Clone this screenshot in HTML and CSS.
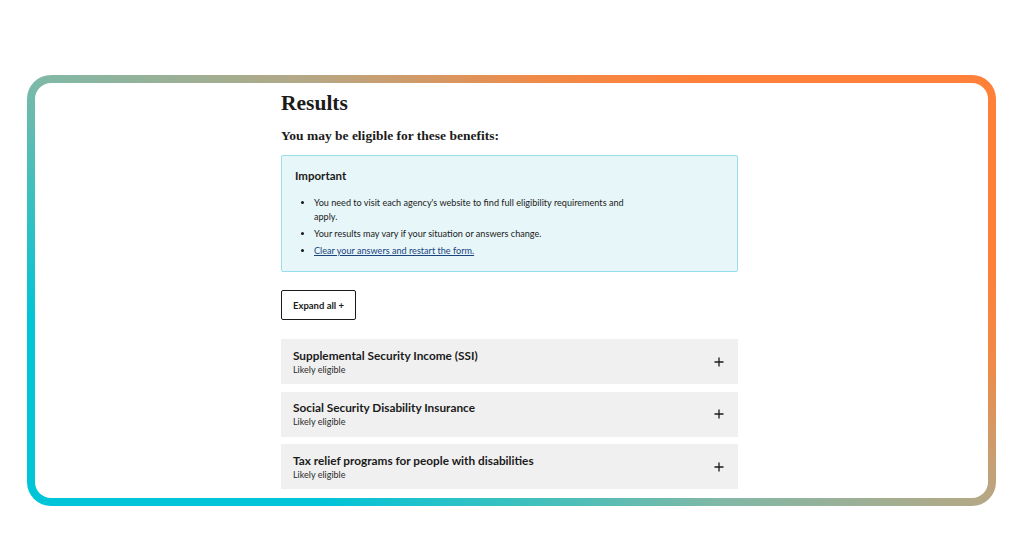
FILE: index.html
```html
<!DOCTYPE html>
<html lang="en">
<head>
<meta charset="utf-8">
<title>Results</title>
<link rel="stylesheet" href="styles.css">
</head>
<body>
<div class="frame">
  <div class="screen">
    <main class="results">
      <h1 class="title">Results</h1>
      <h2 class="subtitle">You may be eligible for these benefits:</h2>
      <section class="alert">
        <h3 class="alert-title">Important</h3>
        <ul class="alert-list">
          <li>You need to visit each agency's website to find full eligibility requirements and apply.</li>
          <li>Your results may vary if your situation or answers change.</li>
          <li><a class="link" href="#">Clear your answers and restart the form.</a></li>
        </ul>
      </section>
      <button class="expand">Expand all +</button>
      <div class="accordion">
        <div class="acc-item">
          <div class="acc-text">
            <div class="acc-title">Supplemental Security Income (SSI)</div>
            <div class="acc-sub">Likely eligible</div>
          </div>
          <svg class="acc-plus" width="10" height="10" viewBox="0 0 10 10" aria-hidden="true"><path d="M5 0.5V9.5M0.5 5H9.5"/></svg>
        </div>
        <div class="acc-item">
          <div class="acc-text">
            <div class="acc-title">Social Security Disability Insurance</div>
            <div class="acc-sub">Likely eligible</div>
          </div>
          <svg class="acc-plus" width="10" height="10" viewBox="0 0 10 10" aria-hidden="true"><path d="M5 0.5V9.5M0.5 5H9.5"/></svg>
        </div>
        <div class="acc-item">
          <div class="acc-text">
            <div class="acc-title">Tax relief programs for people with disabilities</div>
            <div class="acc-sub">Likely eligible</div>
          </div>
          <svg class="acc-plus" width="10" height="10" viewBox="0 0 10 10" aria-hidden="true"><path d="M5 0.5V9.5M0.5 5H9.5"/></svg>
        </div>
      </div>
    </main>
  </div>
</div>
</body>
</html>
```
FILE: styles.css
```css
html, body {
  margin: 0;
  padding: 0;
  background: #ffffff;
}
body {
  padding: 75px 28px 0 27px;
  font-family: "Lato", "Liberation Sans", sans-serif;
  color: #1b1b1b;
}
.frame {
  width: 969px;
  height: 431px;
  box-sizing: border-box;
  padding: 8px;
  border-radius: 24px;
  background: linear-gradient(32deg, #00c4d8 0%, #00c4d8 18%, #40c0bd 31%, #80b8a6 42%, #b4a886 58%, #f08a48 72%, #ff8038 82%, #ff8038 100%);
}
.screen {
  height: 100%;
  background: #ffffff;
  border-radius: 16px;
  overflow: hidden;
}
.results {
  width: 457px;
  margin-left: 246px;
  padding-top: 8px;
}
.title {
  margin: 0;
  font-family: "Liberation Serif", "DejaVu Serif", serif;
  font-weight: 700;
  font-size: 21.5px;
  line-height: 24px;
}
.subtitle {
  margin: 13px 0 0;
  font-family: "Liberation Serif", "DejaVu Serif", serif;
  font-weight: 700;
  font-size: 13.5px;
  line-height: 16px;
}
.alert {
  margin-top: 11px;
  background: #e7f6f8;
  border: 1px solid #97deea;
  border-radius: 2px;
  padding: 12px 13px 13px;
}
.alert-title {
  margin: 0;
  font-size: 11.5px;
  font-weight: 700;
  line-height: 16px;
}
.alert-list {
  margin: 12px 0 0;
  padding-left: 19px;
  max-width: 320px;
  font-size: 9.1px;
  line-height: 14px;
}
.alert-list li {
  margin-bottom: 3px;
}
.alert-list li:last-child {
  margin-bottom: 0;
}
.link {
  color: #1a4480;
  text-decoration: underline;
}
.expand {
  display: block;
  margin-top: 18px;
  width: 75px;
  height: 30px;
  padding: 0;
  background: #ffffff;
  border: 1.5px solid #1b1b1b;
  border-radius: 2px;
  font-family: "Lato", "Liberation Sans", sans-serif;
  font-size: 9.5px;
  font-weight: 700;
  color: #1b1b1b;
}
.accordion {
  margin-top: 19px;
  display: flex;
  flex-direction: column;
  gap: 7.5px;
}
.acc-item {
  display: flex;
  align-items: center;
  justify-content: space-between;
  height: 45px;
  box-sizing: border-box;
  padding: 0 14px 0 12px;
  background: #f0f0f0;
}
.acc-title {
  font-size: 11.8px;
  font-weight: 700;
  line-height: 15px;
}
.acc-sub {
  font-size: 9px;
  line-height: 13px;
  color: #2b2b2b;
}
.acc-plus {
  flex: none;
  fill: none;
  stroke: #1b1b1b;
  stroke-width: 1.3;
}
```
